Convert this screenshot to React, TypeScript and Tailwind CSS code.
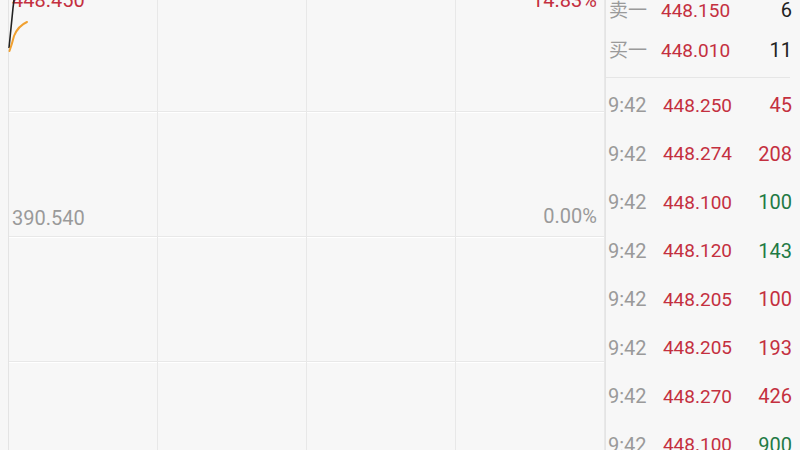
import React from "react";

const ticks = [
  { t: "9:42", p: "448.250", v: "45", up: true },
  { t: "9:42", p: "448.274", v: "208", up: true },
  { t: "9:42", p: "448.100", v: "100", up: false },
  { t: "9:42", p: "448.120", v: "143", up: false },
  { t: "9:42", p: "448.205", v: "100", up: true },
  { t: "9:42", p: "448.205", v: "193", up: true },
  { t: "9:42", p: "448.270", v: "426", up: true },
  { t: "9:42", p: "448.100", v: "900", up: false },
];

function Chart() {
  return (
    <div className="relative w-[605px] h-full overflow-hidden pl-[8px]">
      <div className="grid grid-cols-4 grid-rows-[112px_125px_125px_125px] h-[487px] border-l border-[#e4e4e4]">
        {Array.from({ length: 16 }).map((_, i) => (
          <div
            key={i}
            className="border-r border-b border-[#e8e8e8] shadow-[0_1px_0_#ffffff]"
          />
        ))}
      </div>

      <span className="absolute left-[12px] top-[-10px] text-[20px] text-[#c4303f]">448.450</span>
      <span className="absolute right-[8px] top-[-10px] text-[20px] text-[#c4303f]">14.83%</span>
      <span className="absolute left-[12px] top-[208px] text-[20px] text-[#9a9a9a]">390.540</span>
      <span className="absolute right-[8px] top-[206px] text-[20px] text-[#9a9a9a]">0.00%</span>

      <svg className="absolute left-0 top-0" width="40" height="60" viewBox="0 0 40 60">
        <path d="M9 48 L13 8 L14 0" stroke="#222" strokeWidth="1.6" fill="none" />
        <path d="M9.5 51 Q12 44 14 36 Q18 26 27 22" stroke="#f0a030" strokeWidth="2" fill="none" strokeLinecap="round" />
      </svg>
    </div>
  );
}

function Book() {
  return (
    <div className="flex-1 flex flex-col border-l border-[#e4e4e4] overflow-hidden">
      <div className="-mt-[10px] flex flex-col">
        {[
          { l: "卖一", p: "448.150", v: "6" },
          { l: "买一", p: "448.010", v: "11" },
        ].map((r) => (
          <div key={r.l} className="h-[40px] flex items-center pl-[3px] pr-[8px]">
            <span className="w-[52px] text-[#9a9a9a]">{r.l}</span>
            <span className="w-[68px] text-right text-[#c4303f]">{r.p}</span>
            <span className="flex-1 text-right text-[20px] text-[#222]">{r.v}</span>
          </div>
        ))}
      </div>
      <div className="mt-[7px] mr-[10px] border-t border-[#e6e6e6]" />
      <div className="flex flex-col pt-[3px]">
        {ticks.map((r, i) => (
          <div key={i} className="h-[48.5px] flex items-center pl-[2px] pr-[8px] shrink-0">
            <span className="w-[53px] text-[20px] text-[#9a9a9a]">{r.t}</span>
            <span className="w-[71px] text-right text-[#c4303f]">{r.p}</span>
            <span className={`flex-1 text-right text-[20px] ${r.up ? "text-[#c4303f]" : "text-[#1f7a45]"}`}>{r.v}</span>
          </div>
        ))}
      </div>
    </div>
  );
}

export default function App() {
  return (
    <div
      className="w-[800px] h-[450px] flex bg-[#f7f7f7] overflow-hidden text-[19px] leading-none"
      style={{ fontFamily: 'Roboto, "Noto Sans", "Noto Sans CJK SC", sans-serif' }}
    >
      <Chart />
      <Book />
    </div>
  );
}
